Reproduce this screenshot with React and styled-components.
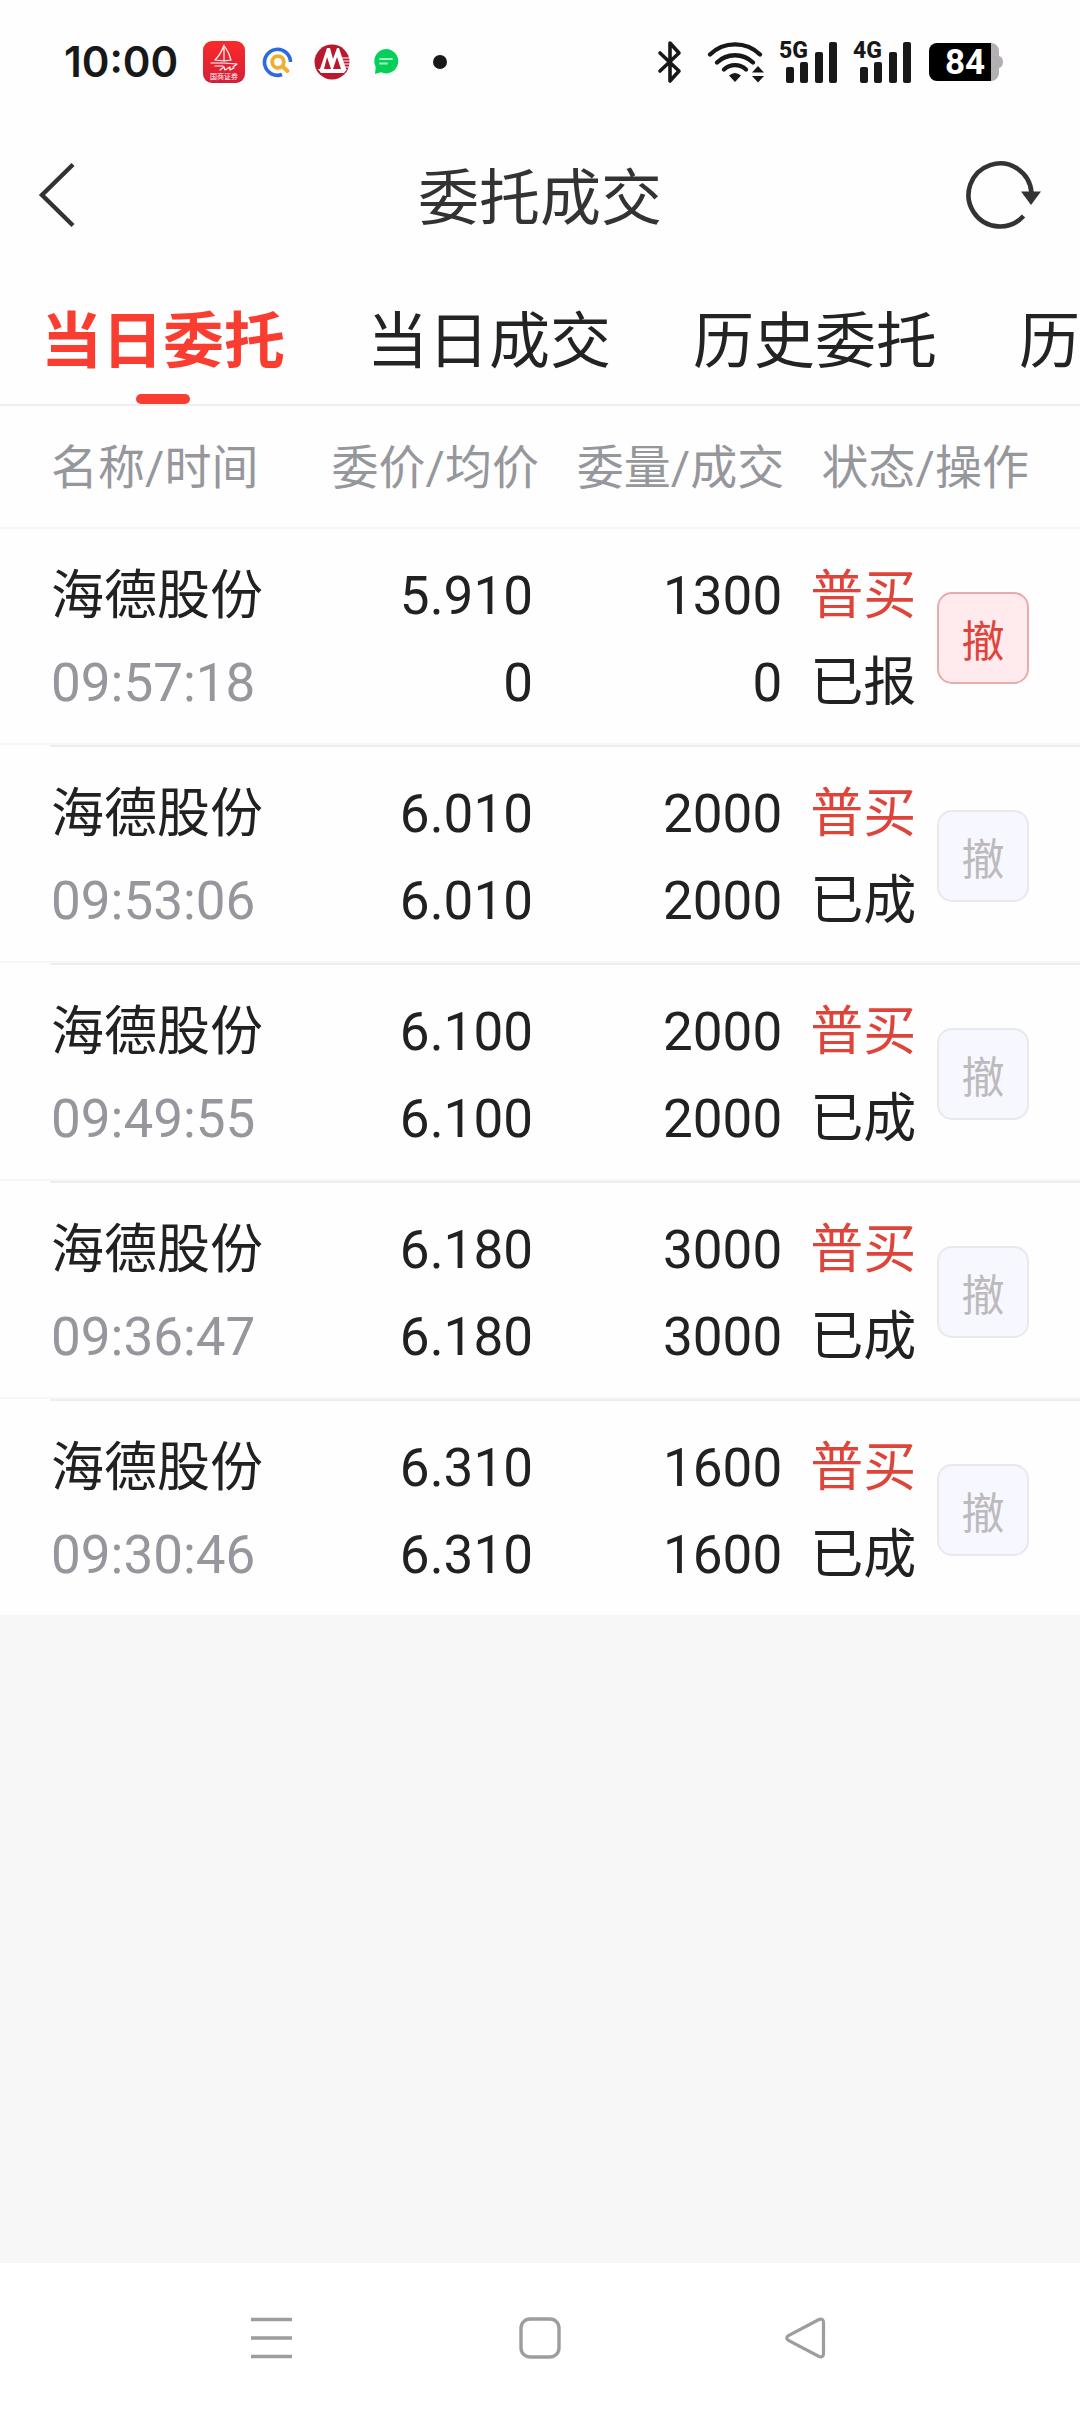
import React, { useState } from "react";
import styled, { createGlobalStyle } from "styled-components";

const tabs = ["当日委托", "当日成交", "历史委托", "历史成交"];

const orders = [
  { name: "海德股份", time: "09:57:18", price: "5.910", avg: "0", amount: "1300", filled: "0", side: "普买", status: "已报", open: true },
  { name: "海德股份", time: "09:53:06", price: "6.010", avg: "6.010", amount: "2000", filled: "2000", side: "普买", status: "已成" },
  { name: "海德股份", time: "09:49:55", price: "6.100", avg: "6.100", amount: "2000", filled: "2000", side: "普买", status: "已成" },
  { name: "海德股份", time: "09:36:47", price: "6.180", avg: "6.180", amount: "3000", filled: "3000", side: "普买", status: "已成" },
  { name: "海德股份", time: "09:30:46", price: "6.310", avg: "6.310", amount: "1600", filled: "1600", side: "普买", status: "已成" },
];

function SailIcon() {
  return (
    <svg width="42" height="42" viewBox="0 0 42 42">
      <defs>
        <linearGradient id="sail" x1="0" y1="0" x2="0" y2="1">
          <stop offset="0" stopColor="#fb2a2a" />
          <stop offset="1" stopColor="#d41f38" />
        </linearGradient>
      </defs>
      <rect width="42" height="42" rx="9" fill="url(#sail)" />
      <g fill="none" stroke="#fff" strokeWidth="1.2" strokeLinejoin="round" strokeLinecap="round">
        <path d="M21 4v16M21 4c-2 6-5 11-9 15l9 1M22 6c3 4 5 9 6 13l-7 1" />
        <path d="M8 22h12M21 22l13 1-4 3M12 25h8M17 29l4-3 1 3 5-3v3l4-2" />
      </g>
      <text x="21" y="38" textAnchor="middle" fontSize="7" fill="#fff" fontFamily="Noto Sans CJK SC, sans-serif">
        国商证券
      </text>
    </svg>
  );
}

function SearchAppIcon() {
  return (
    <svg width="30" height="30" viewBox="0 0 30 30">
      <path d="M19 27.500A13 13 0 1 1 27.500 15" fill="none" stroke="#2a6be2" strokeWidth="3.600" />
      <circle cx="15" cy="15" r="5.800" fill="none" stroke="#f1ad2c" strokeWidth="3.800" />
      <path d="M19.500 19.500l5 4.500" stroke="#f1ad2c" strokeWidth="4" strokeLinecap="round" />
    </svg>
  );
}

function BankIcon() {
  return (
    <svg width="36" height="36" viewBox="0 0 36 36">
      <circle cx="18" cy="18" r="17.500" fill="#b8192e" />
      <path d="M6 25L13 4h3l3 11 4-11h2l7 21h-5L23 13l-4 12h-2l-4-12-3 12z" fill="#fff" />
      <path d="M4 25h29l-3 4H7z" fill="#fff" />
      <path d="M28 14h7M29 17h7M30 20h6M31 23h4" stroke="#fff" strokeWidth="1.200" />
    </svg>
  );
}

function ChatIcon() {
  return (
    <svg width="26" height="28" viewBox="0 0 26 28">
      <path d="M13 1a12.200 12.200 0 1 1-5 23.300L2 26l.7-7A12.200 12.200 0 0 1 13 1z" fill="#06cf59" />
      <path d="M7 11h12M7 15.500h7" stroke="#a5f5c4" strokeWidth="1.800" strokeLinecap="round" />
    </svg>
  );
}

function BluetoothIcon() {
  return (
    <svg width="24" height="42" viewBox="0 0 24 42">
      <path
        d="M2 12l19 18-9 10V2l9 10L2 30"
        fill="none"
        stroke="#181818"
        strokeWidth="3.600"
        strokeLinejoin="round"
        strokeLinecap="round"
      />
    </svg>
  );
}

function WifiIcon() {
  return (
    <svg width="56" height="42" viewBox="1 0 56 42">
      <g fill="none" stroke="#181818" strokeWidth="4.400" strokeLinecap="round">
        <path d="M3 13.500a36 36 0 0 1 50 0" />
        <path d="M10 21.500a26 26 0 0 1 36 0" />
        <path d="M17 28.500a16 16 0 0 1 22 0" />
      </g>
      <path d="M22 34.500q6-5 12 0l-6 6.500z" fill="#181818" />
      <path d="M45 31.500l6-6.500 6 6.500zM45 35h12l-6 6.500z" fill="#181818" />
    </svg>
  );
}

function SignalIcon({ label }) {
  return (
    <svg width="58" height="42" viewBox="0 0 58 42">
      <text x="-1" y="17" fontSize="23" fontWeight="800" fill="#181818" fontFamily="Roboto, sans-serif">
        {label}
      </text>
      <g fill="#181818">
        <rect x="6" y="26" width="8" height="16" rx="2" />
        <rect x="20" y="21" width="8" height="21" rx="2" />
        <rect x="35" y="11" width="8" height="31" rx="2" />
        <rect x="49" y="1" width="8" height="41" rx="2" />
      </g>
    </svg>
  );
}

function BatteryIcon() {
  return (
    <svg width="76" height="40" viewBox="0 0 76 40">
      <path d="M58 1h5a8 8 0 0 1 8 8v5q4 1 4 6t-4 6v5a8 8 0 0 1-8 8h-5z" fill="#b3b0b3" />
      <path d="M9 1h54v38H9a8 8 0 0 1-8-8V9a8 8 0 0 1 8-8z" fill="#000" />
      <text x="37" y="32" textAnchor="middle" fontSize="35" fontWeight="700" fill="#fff" fontFamily="Roboto, sans-serif">
        84
      </text>
    </svg>
  );
}

function App() {
  const [active, setActive] = useState(0);

  return (
    <Page>
      <GlobalStyle />
      <StatusBar>
        <Clock>10:00</Clock>
        <AppIcons>
          <SailIcon />
          <SearchAppIcon />
          <BankIcon />
          <ChatIcon />
          <MoreDot />
        </AppIcons>
        <SystemIcons>
          <BluetoothIcon />
          <Signals>
            <WifiIcon />
            <SignalIcon label="5G" />
            <SignalIcon label="4G" />
            <BatteryIcon />
          </Signals>
        </SystemIcons>
      </StatusBar>

      <TitleBar>
        <IconButton aria-label="返回">
          <svg width="36" height="64" viewBox="0 0 36 64">
            <path d="M34 1.500L3 32l31 30.500" fill="none" stroke="#333" strokeWidth="4.400" />
          </svg>
        </IconButton>
        <Title>委托成交</Title>
        <IconButton aria-label="刷新">
          <svg width="76" height="70" viewBox="0 0 76 70">
            <path d="M58.500 56A31.500 31.500 0 1 1 66.500 33" fill="none" stroke="#333" strokeWidth="4.600" />
            <path d="M56 31.500h20L66 45z" fill="#333" />
          </svg>
        </IconButton>
      </TitleBar>

      <Tabs role="tablist">
        {tabs.map((tab, i) => (
          <Tab key={tab} role="tab" aria-selected={i === active} $active={i === active} onClick={() => setActive(i)}>
            {tab}
          </Tab>
        ))}
      </Tabs>

      <Orders>
        <thead>
          <HeadRow>
            <NameHead>名称/时间</NameHead>
            <PriceHead>委价/均价</PriceHead>
            <AmountHead>委量/成交</AmountHead>
            <StatusHead>状态/操作</StatusHead>
          </HeadRow>
        </thead>
        <tbody>
          {orders.map((order) => (
            <OrderRow key={order.time}>
              <NameCell>
                <Lines>
                  <Line>{order.name}</Line>
                  <Line $color="#96979c">{order.time}</Line>
                </Lines>
              </NameCell>
              <PriceCell>
                <Lines>
                  <Line>{order.price}</Line>
                  <Line>{order.avg}</Line>
                </Lines>
              </PriceCell>
              <AmountCell>
                <Lines>
                  <Line>{order.amount}</Line>
                  <Line>{order.filled}</Line>
                </Lines>
              </AmountCell>
              <StatusCell>
                <StatusBox>
                  <Lines>
                    <Line $color="#dd453b">{order.side}</Line>
                    <Line>{order.status}</Line>
                  </Lines>
                  <CancelButton disabled={!order.open}>撤</CancelButton>
                </StatusBox>
              </StatusCell>
            </OrderRow>
          ))}
        </tbody>
      </Orders>

      <SystemNav>
        <IconButton aria-label="菜单">
          <svg width="42" height="42" viewBox="0 0 42 42">
            <path d="M0 2.500h41M0 21h41M0 39.500h41" stroke="#9d9d9d" strokeWidth="3.600" />
          </svg>
        </IconButton>
        <IconButton aria-label="主页">
          <svg width="42" height="42" viewBox="0 0 42 42">
            <rect x="2" y="2" width="38" height="38" rx="9" fill="none" stroke="#9d9d9d" strokeWidth="3.400" />
          </svg>
        </IconButton>
        <IconButton aria-label="后退">
          <svg width="46" height="42" viewBox="0 0 46 42">
            <path
              d="M34 2.500L3.500 18.500q-3.500 2.500 0 5L34 39.500q4.500 1.500 4.500-3v-31q0-4.500-4.500-3z"
              fill="none"
              stroke="#9d9d9d"
              strokeWidth="3.200"
            />
          </svg>
        </IconButton>
      </SystemNav>
    </Page>
  );
}

export default App;

const GlobalStyle = createGlobalStyle`
  * {
    box-sizing: border-box;
  }

  body {
    margin: 0;
    font-family: Roboto, "Noto Sans CJK SC", sans-serif;
    color: #212121;
    background: #f7f7f7;
  }

  svg {
    display: block;
    flex: none;
    overflow: visible;
  }
`;

const Page = styled.div`
  display: flex;
  flex-direction: column;
  min-height: 100vh;
`;

const StatusBar = styled.div`
  display: flex;
  align-items: center;
  height: 124px;
  padding: 0 76px 0 64px;
  background: #fefefe;
`;

const Clock = styled.span`
  flex: 0 0 133px;
  font-family: Inter, sans-serif;
  font-size: 42px;
  font-weight: 600;
  line-height: 48px;
  color: #181818;
`;

const AppIcons = styled.div`
  display: grid;
  grid-template-columns: repeat(5, 54px);
  align-items: center;
  justify-items: center;
`;

const MoreDot = styled.span`
  width: 14px;
  height: 14px;
  border-radius: 50%;
  background: #181818;
`;

const SystemIcons = styled.div`
  display: flex;
  align-items: center;
  gap: 26px;
  margin-left: auto;
`;

const Signals = styled.div`
  display: flex;
  align-items: center;
  gap: 16px;
`;

const IconButton = styled.button`
  display: flex;
  align-items: center;
  justify-content: center;
  padding: 0;
  border: none;
  background: none;
  cursor: pointer;
`;

const TitleBar = styled.header`
  display: grid;
  grid-template-columns: 1fr auto 1fr;
  align-items: center;
  height: 142px;
  padding: 0 39px;
  background: #fefefe;

  ${IconButton}:first-child {
    justify-self: start;
  }

  ${IconButton}:last-child {
    justify-self: end;
  }
`;

const Title = styled.h1`
  margin: 0;
  padding-top: 8px;
  font-size: 61px;
  font-weight: 400;
  line-height: 80px;
  color: #333;
`;

const Tabs = styled.nav`
  display: flex;
  gap: 82px;
  padding: 0 41px;
  overflow: hidden;
  border-bottom: 2px solid #eee;
  background: #fefefe;
`;

const Tab = styled.button`
  display: flex;
  flex: none;
  flex-direction: column;
  align-items: center;
  gap: 12px;
  padding: 36px 0 0;
  border: none;
  background: none;
  font-family: inherit;
  font-size: 61px;
  font-weight: ${(props) => (props.$active ? 700 : 400)};
  line-height: 80px;
  color: ${(props) => (props.$active ? "#f93e31" : "#222423")};
  white-space: nowrap;
  cursor: pointer;

  &::after {
    content: "";
    width: 54px;
    height: 10px;
    border-radius: 5px;
    background: ${(props) => (props.$active ? "#f93e31" : "transparent")};
  }
`;

const Orders = styled.table`
  width: 100%;
  table-layout: fixed;
  border-collapse: collapse;
  background: #fefefe;
`;

const HeadRow = styled.tr`
  height: 123px;
  background: linear-gradient(#f7f7f7, #f7f7f7) 0 100% / 100% 2px no-repeat;
`;

const Head = styled.th`
  padding: 0;
  font-size: 47px;
  font-weight: 400;
  line-height: 60px;
  text-align: right;
  color: #96979c;
  white-space: nowrap;
`;

const NameHead = styled(Head)`
  width: 27%;
  padding-left: 51px;
  text-align: left;
`;

const PriceHead = styled(Head)`
  width: 23%;
  padding-right: 1px;
`;

const AmountHead = styled(Head)`
  width: 24%;
  padding-right: 15px;
`;

const StatusHead = styled(Head)`
  width: 26%;
  padding-right: 51px;
`;

/* full-width hairline with a darker inset one below it */
const OrderRow = styled.tr`
  height: 218px;
  background:
    linear-gradient(#eee, #eee) 50px 100% / 100% 2px no-repeat,
    linear-gradient(#fefefe, #fefefe) 0 100% / 100% 2px no-repeat,
    linear-gradient(#f7f7f7, #f7f7f7) 0 100% / 100% 4px no-repeat;

  &:last-child {
    height: 214px;
    background: none;
  }
`;

const Cell = styled.td`
  padding: 20px 0 0;
  text-align: right;
  vertical-align: top;
`;

const NameCell = styled(Cell)`
  padding-left: 51px;
  text-align: left;
`;

const PriceCell = styled(Cell)`
  padding-right: 7px;
`;

const AmountCell = styled(Cell)`
  padding-right: 17px;
`;

const StatusCell = styled(Cell)`
  padding-left: 11px;
  padding-right: 51px;
`;

const Lines = styled.div`
  padding-top: 4px;
`;

const Line = styled.div`
  font-size: 53px;
  line-height: 87px;
  white-space: nowrap;
  color: ${(props) => props.$color || "#212121"};
`;

const StatusBox = styled.div`
  display: flex;
  align-items: center;
  justify-content: space-between;
`;

const CancelButton = styled.button`
  width: 92px;
  height: 92px;
  padding: 0;
  border: 2px solid #e8acac;
  border-radius: 15px;
  background: #ffebed;
  font-family: inherit;
  font-size: 43px;
  color: #dd453b;
  cursor: pointer;

  &:disabled {
    border-color: #e8e9ec;
    background: #f7f7ff;
    color: #bdbabc;
    cursor: default;
  }
`;

const SystemNav = styled.nav`
  display: grid;
  grid-template-columns: repeat(3, 1fr);
  height: 149px;
  margin-top: auto;
  padding: 0 138px;
  background: #fff;
`;
